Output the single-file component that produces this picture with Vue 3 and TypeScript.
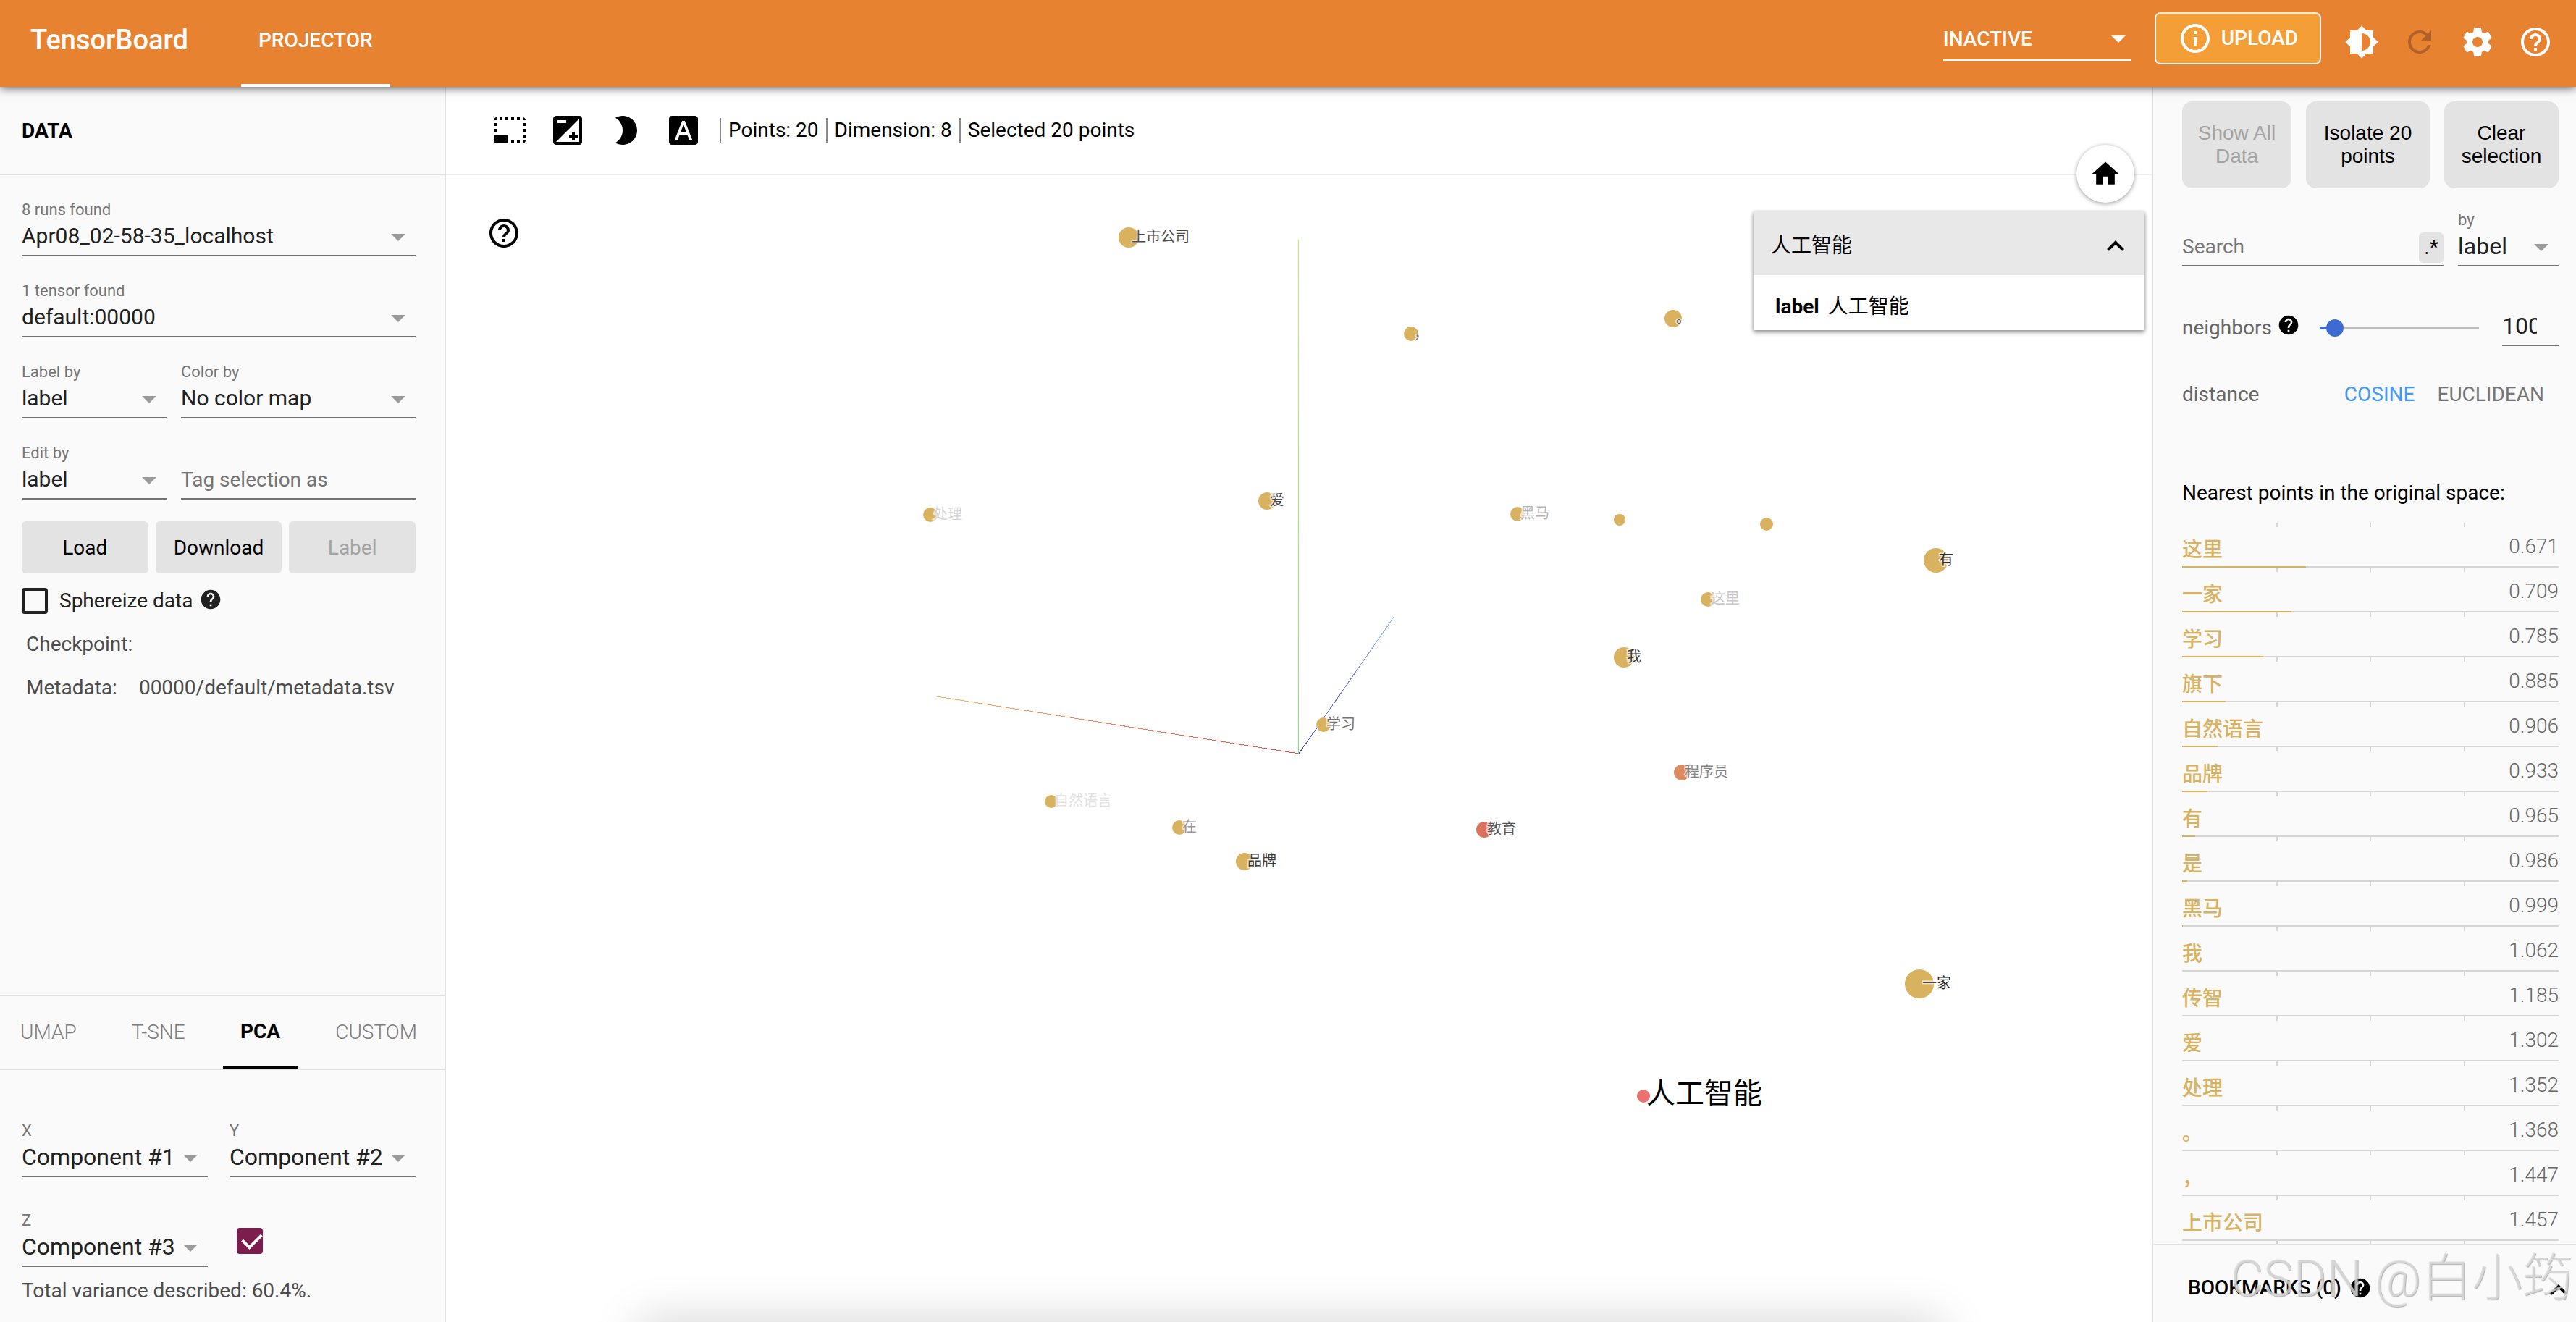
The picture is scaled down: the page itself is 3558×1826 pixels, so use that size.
<script setup lang="ts">
import { ref } from 'vue'

interface Neighbor {
  label: string
  distance: number
}

interface PlotPoint {
  x: number
  y: number
  r: number
  label?: string
  fill?: string
  ink?: string
  big?: boolean
}

const icons = {
  helpOutline:
    'M11 18h2v-2h-2v2zm1-16C6.48 2 2 6.48 2 12s4.48 10 10 10 10-4.48 10-10S17.52 2 12 2zm0 18c-4.41 0-8-3.59-8-8s3.59-8 8-8 8 3.59 8 8-3.59 8-8 8zm0-14c-2.21 0-4 1.79-4 4h2c0-1.1.9-2 2-2s2 .9 2 2c0 2-3 1.75-3 5h2c0-2.25 3-2.5 3-5 0-2.21-1.79-4-4-4z',
  help: 'M12 2C6.48 2 2 6.48 2 12s4.48 10 10 10 10-4.48 10-10S17.52 2 12 2zm1 17h-2v-2h2v2zm2.07-7.75l-.9.92C13.45 12.9 13 13.5 13 15h-2v-.5c0-1.1.45-2.1 1.17-2.83l1.24-1.26c.37-.36.59-.86.59-1.41 0-1.1-.9-2-2-2s-2 .9-2 2H8c0-2.21 1.79-4 4-4s4 1.79 4 4c0 .88-.36 1.68-.93 2.25z',
  info: 'M11 17h2v-6h-2v6zm1-15C6.48 2 2 6.48 2 12s4.48 10 10 10 10-4.48 10-10S17.52 2 12 2zm0 18c-4.41 0-8-3.59-8-8s3.59-8 8-8 8 3.59 8 8-3.59 8-8 8zM11 9h2V7h-2v2z',
  brightness:
    'M20 15.31L23.31 12 20 8.69V4h-4.69L12 .69 8.69 4H4v4.69L.69 12 4 15.31V20h4.69L12 23.31 15.31 20H20v-4.69zM12 18V6c3.31 0 6 2.69 6 6s-2.69 6-6 6z',
  refresh:
    'M17.65 6.35C16.2 4.9 14.21 4 12 4c-4.42 0-7.99 3.58-7.99 8s3.57 8 7.99 8c3.73 0 6.84-2.55 7.73-6h-2.08c-.82 2.33-3.04 4-5.65 4-3.31 0-6-2.69-6-6s2.69-6 6-6c1.66 0 3.14.69 4.22 1.78L13 11h7V4l-2.35 2.35z',
  settings:
    'M19.43 12.98c.04-.32.07-.64.07-.98s-.03-.66-.07-.98l2.11-1.65c.19-.15.24-.42.12-.64l-2-3.46c-.12-.22-.39-.3-.61-.22l-2.49 1c-.52-.4-1.08-.73-1.69-.98l-.38-2.65C14.46 2.18 14.25 2 14 2h-4c-.25 0-.46.18-.49.42l-.38 2.65c-.61.25-1.17.59-1.69.98l-2.49-1c-.23-.09-.49 0-.61.22l-2 3.46c-.13.22-.07.49.12.64l2.11 1.65c-.04.32-.07.65-.07.98s.03.66.07.98l-2.11 1.65c-.19.15-.24.42-.12.64l2 3.46c.12.22.39.3.61.22l2.49-1c.52.4 1.08.73 1.69.98l.38 2.65c.03.24.24.42.49.42h4c.25 0 .46-.18.49-.42l.38-2.65c.61-.25 1.17-.59 1.69-.98l2.49 1c.23.09.49 0 .61-.22l2-3.46c.12-.22.07-.49-.12-.64l-2.11-1.65zM12 15.5c-1.93 0-3.5-1.57-3.5-3.5s1.57-3.5 3.5-3.5 3.5 1.57 3.5 3.5-1.57 3.5-3.5 3.5z',
  home: 'M10 20v-6h4v6h5v-8h3L12 3 2 12h3v8z',
  chevronUp: 'M12 8l-6 6 1.41 1.41L12 10.83l4.59 4.58L18 14z',
  selectArea:
    'M23 15h-2v2h2v-2zm0-4h-2v2h2v-2zm0 8h-2v2c1 0 2-1 2-2zM15 3h-2v2h2V3zm8 4h-2v2h2V7zm-2-4v2h2c0-1-1-2-2-2zM3 21h8v-6H1v4c0 1.1.9 2 2 2zM3 7H1v2h2V7zm12 12h-2v2h2v-2zm4-16h-2v2h2V3zm0 16h-2v2h2v-2zM3 3C2 3 1 4 1 5h2V3zm0 8H1v2h2v-2zm8-8H9v2h2V3zM7 3H5v2h2V3z',
  exposure:
    'M15 17v2h2v-2h2v-2h-2v-2h-2v2h-2v2h2zm5-15H4c-1.1 0-2 .9-2 2v16c0 1.1.9 2 2 2h16c1.1 0 2-.9 2-2V4c0-1.1-.9-2-2-2zM5 5h6v2H5V5zm15 15H4L20 4v16z',
  night:
    'M10 2c-1.82 0-3.53.5-5 1.35C7.99 5.08 10 8.3 10 12s-2.01 6.92-5 8.65C6.47 21.5 8.18 22 10 22c5.52 0 10-4.48 10-10S15.52 2 10 2z',
  labels3d:
    'M9.93 13.5h4.14L12 7.98zM20 2H4c-1.1 0-2 .9-2 2v16c0 1.1.9 2 2 2h16c1.1 0 2-.9 2-2V4c0-1.1-.9-2-2-2zm-4.05 16.5l-1.14-3H9.17l-1.12 3H5.96l5.11-13h1.86l5.11 13h-2.09z',
}

const headerActions = [
  { name: 'Toggle theme', path: icons.brightness, off: false },
  { name: 'Reload data', path: icons.refresh, off: true },
  { name: 'Settings', path: icons.settings, off: false },
  { name: 'Help', path: icons.helpOutline, off: false },
]

const plotTools = [
  { name: 'Bounding box selection', path: icons.selectArea },
  { name: 'Edit mode', path: icons.exposure },
  { name: 'Night mode', path: icons.night },
  { name: '3D labels', path: icons.labels3d },
]

const tabs = ['UMAP', 'T-SNE', 'PCA', 'CUSTOM']
const activeTab = ref('PCA')
const sphereize = ref(false)
const useZ = ref(true)
const search = ref('')
const tag = ref('')
const neighborCount = ref(100)
const metric = ref('COSINE')

const neighbors: Neighbor[] = [
  { label: '这里', distance: 0.671 },
  { label: '一家', distance: 0.709 },
  { label: '学习', distance: 0.785 },
  { label: '旗下', distance: 0.885 },
  { label: '自然语言', distance: 0.906 },
  { label: '品牌', distance: 0.933 },
  { label: '有', distance: 0.965 },
  { label: '是', distance: 0.986 },
  { label: '黑马', distance: 0.999 },
  { label: '我', distance: 1.062 },
  { label: '传智', distance: 1.185 },
  { label: '爱', distance: 1.302 },
  { label: '处理', distance: 1.352 },
  { label: '。', distance: 1.368 },
  { label: '，', distance: 1.447 },
  { label: '上市公司', distance: 1.457 },
]

const barWidth = (n: Neighbor): string => `${Math.max(0, 1 - n.distance) * 100}%`

const points: PlotPoint[] = [
  { x: 943, y: 86, r: 14, label: '上市公司', ink: '#4a4a4a' },
  { x: 1333, y: 219, r: 10, label: '，', ink: '#777777' },
  { x: 1695, y: 198, r: 12, label: '。', ink: '#555555' },
  { x: 1134, y: 450, r: 12, label: '爱', ink: '#4a4a4a' },
  { x: 669, y: 469, r: 10, label: '处理', ink: '#d6d6d6' },
  { x: 1480, y: 468, r: 10, label: '黑马', ink: '#b4b4b4' },
  { x: 1621, y: 476, r: 8 },
  { x: 1824, y: 482, r: 9 },
  { x: 2058, y: 532, r: 17, label: '有', ink: '#2e2e2e' },
  { x: 1743, y: 586, r: 10, label: '这里', ink: '#c6c6c6' },
  { x: 1627, y: 666, r: 14, label: '我', ink: '#3a3a3a' },
  { x: 1212, y: 759, r: 10, label: '学习', ink: '#737373' },
  { x: 1707, y: 825, r: 11, label: '程序员', ink: '#858585', fill: '#dc8c60' },
  { x: 836, y: 865, r: 9, label: '自然语言', ink: '#e2e2e2' },
  { x: 1013, y: 901, r: 10, label: '在', ink: '#979797' },
  { x: 1434, y: 904, r: 11, label: '教育', ink: '#555555', fill: '#dc735f' },
  { x: 1103, y: 948, r: 12, label: '品牌', ink: '#3a3a3a' },
  { x: 2035, y: 1117, r: 20, label: '一家', ink: '#222222' },
  { x: 1654, y: 1272, r: 9, label: '人工智能', ink: '#000000', fill: '#eb716e', big: true },
]
</script>

<template>
  <div class="page">
    <header class="topbar">
      <h1 class="brand">TensorBoard</h1>
      <nav class="plugins"><a href="#projector" class="plugin">PROJECTOR</a></nav>
      <div class="select-box inactive">
        <select aria-label="Inactive plugins">
          <option>INACTIVE</option>
        </select>
        <svg class="arrow" viewBox="0 0 20 10"><path d="M0 0h20L10 10z" /></svg>
      </div>
      <button type="button" class="upload">
        <svg class="icon" viewBox="0 0 24 24"><path :d="icons.info" /></svg>
        <span>UPLOAD</span>
      </button>
      <div class="actions">
        <button
          v-for="a in headerActions"
          :key="a.name"
          type="button"
          class="icon-button"
          :class="{ off: a.off }"
          :aria-label="a.name"
        >
          <svg class="icon" viewBox="0 0 24 24"><path :d="a.path" /></svg>
        </button>
      </div>
    </header>

    <div class="body">
      <aside class="left">
        <h2 class="panel-title">DATA</h2>
        <div class="data-form">
          <div class="field">
            <label for="run">8 runs found</label>
            <div class="select-box">
              <select id="run"><option>Apr08_02-58-35_localhost</option></select>
              <svg class="arrow" viewBox="0 0 20 10"><path d="M0 0h20L10 10z" /></svg>
            </div>
          </div>
          <div class="field">
            <label for="tensor">1 tensor found</label>
            <div class="select-box">
              <select id="tensor"><option>default:00000</option></select>
              <svg class="arrow" viewBox="0 0 20 10"><path d="M0 0h20L10 10z" /></svg>
            </div>
          </div>
          <div class="pair">
            <div class="field">
              <label for="label-by">Label by</label>
              <div class="select-box">
                <select id="label-by"><option>label</option></select>
                <svg class="arrow" viewBox="0 0 20 10"><path d="M0 0h20L10 10z" /></svg>
              </div>
            </div>
            <div class="field">
              <label for="color-by">Color by</label>
              <div class="select-box">
                <select id="color-by"><option>No color map</option></select>
                <svg class="arrow" viewBox="0 0 20 10"><path d="M0 0h20L10 10z" /></svg>
              </div>
            </div>
          </div>
          <div class="pair">
            <div class="field">
              <label for="edit-by">Edit by</label>
              <div class="select-box">
                <select id="edit-by"><option>label</option></select>
                <svg class="arrow" viewBox="0 0 20 10"><path d="M0 0h20L10 10z" /></svg>
              </div>
            </div>
            <div class="field">
              <div class="text-box">
                <input v-model="tag" type="text" placeholder="Tag selection as" aria-label="Tag selection as" />
              </div>
            </div>
          </div>
          <div class="buttons">
            <button type="button">Load</button>
            <button type="button">Download</button>
            <button type="button" disabled>Label</button>
          </div>
          <div class="sphereize">
            <input id="sphereize" v-model="sphereize" type="checkbox" class="check" />
            <label for="sphereize">Sphereize data</label>
            <svg class="hint" viewBox="0 0 24 24"><path :d="icons.help" /></svg>
          </div>
          <p class="meta"><span>Checkpoint:</span></p>
          <p class="meta"><span>Metadata:</span><span>00000/default/metadata.tsv</span></p>
        </div>

        <section class="projections">
          <div class="tabs" role="tablist">
            <button
              v-for="t in tabs"
              :key="t"
              type="button"
              role="tab"
              class="tab"
              :class="{ active: t === activeTab }"
              :aria-selected="t === activeTab"
              @click="activeTab = t"
            >
              {{ t }}
            </button>
          </div>
          <div class="components">
            <div class="field">
              <label for="comp-x">X</label>
              <div class="select-box">
                <select id="comp-x"><option>Component #1</option></select>
                <svg class="arrow" viewBox="0 0 20 10"><path d="M0 0h20L10 10z" /></svg>
              </div>
            </div>
            <div class="field">
              <label for="comp-y">Y</label>
              <div class="select-box">
                <select id="comp-y"><option>Component #2</option></select>
                <svg class="arrow" viewBox="0 0 20 10"><path d="M0 0h20L10 10z" /></svg>
              </div>
            </div>
            <div class="field">
              <label for="comp-z">Z</label>
              <div class="select-box">
                <select id="comp-z"><option>Component #3</option></select>
                <svg class="arrow" viewBox="0 0 20 10"><path d="M0 0h20L10 10z" /></svg>
              </div>
            </div>
            <div class="z-toggle">
              <input v-model="useZ" type="checkbox" class="check" aria-label="Use Z component" />
            </div>
          </div>
          <p class="variance">Total variance described: 60.4%.</p>
        </section>
      </aside>

      <main class="stage">
        <div class="tools">
          <button v-for="t in plotTools" :key="t.name" type="button" class="icon-button" :aria-label="t.name">
            <svg class="icon" viewBox="0 0 24 24"><path :d="t.path" /></svg>
          </button>
          <div class="stats">
            <span>Points: 20</span>
            <span>Dimension: 8</span>
            <span>Selected 20 points</span>
          </div>
        </div>

        <div class="canvas">
          <svg class="plot" viewBox="0 0 2356 1584" preserveAspectRatio="xMinYMin meet">
            <defs>
              <linearGradient id="axis-y" gradientUnits="userSpaceOnUse" x1="0" y1="799" x2="0" y2="89">
                <stop offset="0" stop-color="#7fe676" />
                <stop offset="1" stop-color="#b9f05c" />
              </linearGradient>
              <linearGradient id="axis-x" gradientUnits="userSpaceOnUse" x1="1178" y1="799" x2="678" y2="720">
                <stop offset="0" stop-color="#e5484a" />
                <stop offset="1" stop-color="#f5b566" />
              </linearGradient>
              <linearGradient id="axis-z" gradientUnits="userSpaceOnUse" x1="1178" y1="799" x2="1310" y2="609">
                <stop offset="0" stop-color="#3c46e0" />
                <stop offset="1" stop-color="#93c4f7" />
              </linearGradient>
            </defs>
            <path class="axis" d="M1178 799L678 720" stroke="url(#axis-x)" />
            <path class="axis" d="M1178 799L1310 609" stroke="url(#axis-z)" />
            <rect x="1177" y="89" width="1" height="710" fill="url(#axis-y)" />
            <circle v-for="(p, i) in points" :key="i" :cx="p.x" :cy="p.y" :r="p.r" :fill="p.fill ?? '#d9b25f'" />
            <template v-for="(p, i) in points" :key="i">
              <text
                v-if="p.label"
                class="point-label"
                :class="{ big: p.big }"
                :x="p.x + 4"
                :y="p.y + (p.big ? 10 : 6)"
                :fill="p.ink"
              >
                {{ p.label }}
              </text>
            </template>
          </svg>

          <button type="button" class="icon-button guide" aria-label="Projector help">
            <svg class="icon" viewBox="0 0 24 24"><path :d="icons.helpOutline" /></svg>
          </button>
          <button type="button" class="home" aria-label="Reset view">
            <svg viewBox="0 0 24 24"><path :d="icons.home" /></svg>
          </button>
          <section class="card">
            <div class="card-head">
              <span>人工智能</span>
              <button type="button" class="icon-button" aria-label="Collapse">
                <svg class="icon" viewBox="0 0 24 24"><path :d="icons.chevronUp" /></svg>
              </button>
            </div>
            <div class="card-body"><b>label</b><span>人工智能</span></div>
          </section>
          <div class="dock-shadow"></div>
        </div>
      </main>

      <aside class="right">
        <div class="inspector">
          <div class="set-buttons">
            <button type="button" disabled>Show All Data</button>
            <button type="button">Isolate 20 points</button>
            <button type="button">Clear selection</button>
          </div>

          <div class="search-row">
            <div class="text-box">
              <input v-model="search" type="text" placeholder="Search" aria-label="Search" />
              <button type="button" class="regex" aria-label="Use regular expression">.*</button>
            </div>
            <div class="field">
              <label for="search-by">by</label>
              <div class="select-box">
                <select id="search-by"><option>label</option></select>
                <svg class="arrow" viewBox="0 0 20 10"><path d="M0 0h20L10 10z" /></svg>
              </div>
            </div>
          </div>

          <div class="neighbors">
            <label for="nn">neighbors</label>
            <svg class="hint" viewBox="0 0 24 24"><path :d="icons.help" /></svg>
            <input id="nn" v-model.number="neighborCount" type="range" min="5" max="999" />
            <div class="count"><input v-model.number="neighborCount" type="text" aria-label="Neighbor count" /></div>
          </div>

          <div class="distance">
            <span>distance</span>
            <a href="#cosine" :class="{ on: metric === 'COSINE' }" @click.prevent="metric = 'COSINE'">COSINE</a>
            <a href="#euclidean" :class="{ on: metric === 'EUCLIDEAN' }" @click.prevent="metric = 'EUCLIDEAN'">EUCLIDEAN</a>
          </div>

          <h3 class="nearest-title">Nearest points in the original space:</h3>
          <ul class="nearest">
            <li v-for="n in neighbors" :key="n.label">
              <div class="entry">
                <a href="#point">{{ n.label }}</a>
                <span>{{ n.distance.toFixed(3) }}</span>
              </div>
              <div class="bar"><div class="fill" :style="{ width: barWidth(n) }"></div></div>
            </li>
          </ul>
        </div>

        <div class="bookmarks">
          <span class="bookmarks-title">BOOKMARKS (0)</span>
          <svg class="hint" viewBox="0 0 24 24"><path :d="icons.help" /></svg>
          <button type="button" class="icon-button" aria-label="Expand bookmarks">
            <svg class="icon" viewBox="0 0 24 24"><path :d="icons.chevronUp" /></svg>
          </button>
        </div>
      </aside>
    </div>

    <div class="watermark">CSDN @白小筠</div>
  </div>
</template>

<style>
body {
  margin: 0;
}
</style>

<style scoped>
* {
  box-sizing: border-box;
}

.page {
  position: relative;
  display: flex;
  flex-direction: column;
  min-height: 100vh;
  overflow: hidden;
  background: #ffffff;
  color: #000000;
  font-family: Roboto, 'Noto Sans CJK SC', sans-serif;
  font-size: 28px;
  line-height: 40px;
}

h1,
h2,
h3,
p,
ul {
  margin: 0;
  padding: 0;
}

button,
input,
select {
  margin: 0;
  padding: 0;
  border: 0;
  outline: 0;
  border-radius: 0;
  background: none;
  color: inherit;
  font: inherit;
}

a {
  color: inherit;
  text-decoration: none;
}

svg {
  display: block;
  fill: currentColor;
}

.icon {
  width: 48px;
  height: 48px;
}

.hint {
  width: 32px;
  height: 32px;
}

.icon-button {
  display: block;
  flex: none;
}

/* top bar */
.topbar {
  position: relative;
  z-index: 2;
  display: flex;
  align-items: center;
  height: 120px;
  padding: 0 32px 10px 42px;
  background: #e78231;
  box-shadow: 0 2px 12px rgba(0, 0, 0, 0.6);
  color: #ffffff;
}

.brand {
  font-size: 38px;
  font-weight: 500;
}

.plugins {
  align-self: stretch;
  margin: 0 auto 0 73px;
}

.plugin {
  display: block;
  height: 120px;
  padding: 0 24px;
  border-bottom: 4px solid #ffffff;
  font-weight: 500;
  line-height: 112px;
}

.inactive {
  width: 260px;
  margin: 2px 32px 0 0;
}

.upload {
  display: flex;
  align-items: center;
  gap: 12px;
  height: 72px;
  margin: 0 32px 4px 0;
  padding: 0 30px;
  border: 2px solid #f1f1f1;
  border-radius: 8px;
  background: #f49e38;
  font-weight: 500;
}

.actions {
  display: flex;
  gap: 32px;
  margin-top: 6px;
}

.off {
  color: #b0612a;
}

/* form fields */
.field {
  display: flex;
  flex-direction: column;
  justify-content: flex-end;
  min-width: 0;
}

.field > label {
  color: #757575;
  font-size: 22px;
  line-height: 28px;
}

.select-box,
.text-box {
  display: grid;
  grid-template-columns: minmax(0, 1fr);
  align-items: center;
  border-bottom: 2px solid #737373;
}

.select-box > * {
  grid-area: 1 / 1;
}

.select-box select {
  width: 100%;
  height: 48px;
  padding-bottom: 4px;
  appearance: none;
  color: #212121;
  font-size: 30px;
}

.arrow {
  justify-self: end;
  width: 20px;
  height: 10px;
  margin-right: 14px;
  color: #9a9a9a;
  pointer-events: none;
}

.text-box input {
  width: 100%;
  height: 48px;
  padding-bottom: 4px;
}

.text-box input::placeholder {
  color: #757575;
  opacity: 1;
}

.inactive.select-box {
  border-color: #ffffff;
}

.inactive.select-box select {
  height: 54px;
  padding-bottom: 2px;
  color: #ffffff;
  font-size: 28px;
  font-weight: 500;
}

.inactive .arrow {
  margin: 0 8px 2px 0;
  color: #ffffff;
}

.check {
  display: block;
  flex: none;
  width: 36px;
  height: 36px;
  border: 4px solid #212121;
  border-radius: 4px;
  appearance: none;
}

.check:checked {
  padding-left: 9px;
  border-width: 2px 4px 4px;
  border-color: #7b1e4e;
  background: #7b1e4e;
}

.check:checked::after {
  content: '';
  display: block;
  width: 12px;
  height: 22px;
  border: solid #ffffff;
  border-width: 0 4px 4px 0;
  transform: rotate(45deg);
}

/* columns */
.body {
  display: flex;
  flex: 1;
}

.left {
  display: flex;
  flex: none;
  flex-direction: column;
  width: 616px;
  border-right: 2px solid #e0e0e0;
  background: #fafafa;
}

.panel-title {
  padding: 41px 30px 39px;
  border-bottom: 2px solid #e0e0e0;
  font-size: 28px;
  font-weight: 700;
}

.data-form {
  padding: 0 40px 0 30px;
}

.data-form .field {
  padding-top: 34px;
}

.pair {
  display: grid;
  grid-template-columns: 200fr 324fr;
  gap: 20px;
}

.buttons {
  display: grid;
  grid-template-columns: repeat(3, 1fr);
  gap: 10px;
  margin: 30px 0 20px;
}

.buttons button {
  height: 72px;
  padding-top: 2px;
  border-radius: 6px;
  background: #e3e3e3;
}

button:disabled {
  color: #a3a3a3;
}

.sphereize {
  display: flex;
  align-items: center;
  height: 36px;
  margin-bottom: 12px;
  color: #212121;
}

.sphereize label {
  margin: 0 9px 0 16px;
}

.sphereize .hint {
  margin-bottom: 4px;
}

.meta {
  display: flex;
  gap: 30px;
  padding-left: 6px;
  color: #4c4c4c;
  line-height: 60px;
}

.projections {
  margin-top: auto;
  border-top: 2px solid #e0e0e0;
}

.tabs {
  display: flex;
  justify-content: space-between;
  height: 102px;
  padding: 0 14px 0 4px;
  border-bottom: 2px solid #e0e0e0;
}

.tab {
  height: 101px;
  padding: 2px 24px 0;
  border-bottom: 4px solid transparent;
  color: #7d7d7d;
  font-weight: 300;
}

.tab.active {
  padding-top: 0;
  border-color: #000000;
  color: #000000;
  font-weight: 700;
}

.components {
  display: grid;
  grid-template-columns: 1fr 1fr;
  gap: 46px 30px;
  padding: 70px 40px 0 30px;
}

.components .select-box select {
  font-size: 32px;
}

.z-toggle {
  padding: 24px 0 0 10px;
}

.variance {
  padding: 13px 30px 23px;
  color: #4c4c4c;
}

/* plot area */
.stage {
  display: flex;
  flex: 1;
  flex-direction: column;
  min-width: 0;
}

.tools {
  display: flex;
  align-items: center;
  gap: 32px;
  height: 122px;
  padding-left: 64px;
  border-bottom: 2px solid #eeeeee;
}

.stats {
  display: flex;
  margin-left: -6px;
}

.stats span {
  padding: 0 10px;
  border-left: 2px solid #8a8a8a;
  line-height: 34px;
}

.canvas {
  position: relative;
  flex: 1;
}

.plot {
  position: absolute;
  inset: 0;
  width: 100%;
  height: 100%;
}

.axis {
  shape-rendering: crispEdges;
}

.point-label {
  font-size: 20px;
  paint-order: stroke;
  stroke: rgba(255, 255, 255, 0.7);
  stroke-width: 3px;
}

.point-label.big {
  font-size: 40px;
}

.guide {
  position: absolute;
  top: 56px;
  left: 56px;
}

.home {
  position: absolute;
  top: -42px;
  right: 24px;
  width: 80px;
  height: 80px;
  border-radius: 50%;
  background: #ffffff;
  box-shadow:
    0 2px 6px rgba(0, 0, 0, 0.3),
    0 0 4px rgba(0, 0, 0, 0.12);
}

.home svg {
  width: 44px;
  height: 44px;
  margin: 0 auto;
}

.card {
  position: absolute;
  top: 50px;
  right: 10px;
  width: 540px;
  background: #ffffff;
  box-shadow:
    0 3px 6px rgba(0, 0, 0, 0.4),
    0 0 4px rgba(0, 0, 0, 0.15);
}

.card-head {
  display: flex;
  align-items: center;
  justify-content: space-between;
  height: 88px;
  padding: 7px 16px 0 24px;
  background: #e8e8e8;
}

.card-body {
  display: flex;
  gap: 12px;
  height: 76px;
  padding: 24px 30px 0;
}

.dock-shadow {
  position: absolute;
  right: 291px;
  bottom: -60px;
  left: 267px;
  height: 60px;
  box-shadow: 0 0 66px rgba(0, 0, 0, 0.19);
}

/* inspector */
.right {
  position: relative;
  display: flex;
  flex: none;
  flex-direction: column;
  width: 586px;
  border-left: 2px solid #e0e0e0;
  background: #fafafa;
}

.inspector {
  flex: 1;
  padding: 20px 24px 0 40px;
}

.set-buttons {
  display: grid;
  grid-template-columns: 151fr 171fr 158fr;
  gap: 20px;
  font-family: 'Liberation Sans', Arial, sans-serif;
  line-height: 32px;
}

.set-buttons button {
  height: 120px;
  padding: 0 20px;
  border-radius: 14px;
  background: #e3e3e3;
}

.search-row {
  display: grid;
  grid-template-columns: 361fr 139fr;
  align-items: end;
  gap: 20px;
  margin-top: 30px;
}

.search-row .text-box {
  grid-template-columns: minmax(0, 1fr) 34px;
}

.search-row .select-box select {
  font-size: 32px;
}

.regex {
  height: 42px;
  border-radius: 6px;
  background: #e3e3e3;
}

.neighbors {
  display: flex;
  align-items: center;
  height: 50px;
  margin-top: 60px;
  color: #666666;
}

.neighbors .hint {
  flex: none;
  margin: 0 15px 8px 7px;
  color: #000000;
}

.neighbors input[type='range'] {
  flex: 1;
  min-width: 0;
  height: 24px;
  margin-right: 20px;
  appearance: none;
}

.neighbors input[type='range']::-webkit-slider-runnable-track {
  height: 4px;
  background:
    linear-gradient(#3e6bd1, #3e6bd1) 12px 0 / 16px 4px no-repeat,
    linear-gradient(90deg, transparent 12px, #bdbdbd 12px, #bdbdbd calc(100% - 12px), transparent calc(100% - 12px));
}

.neighbors input[type='range']::-webkit-slider-thumb {
  width: 24px;
  height: 24px;
  margin-top: -10px;
  border-radius: 50%;
  background: #3e6bd1;
  appearance: none;
}

.count {
  width: 78px;
  height: 50px;
  border-bottom: 2px solid #737373;
}

.count input {
  display: block;
  width: 48px;
  height: 44px;
  color: #212121;
  font-size: 32px;
}

.distance {
  display: flex;
  gap: 31px;
  margin-top: 47px;
  padding-right: 20px;
  color: #757575;
}

.distance span {
  margin-right: auto;
  color: #666666;
}

.distance .on {
  color: #4299f5;
}

.nearest-title {
  margin: 96px 0 21px;
  font-size: 28px;
  font-weight: 400;
}

.nearest {
  list-style: none;
}

.nearest li,
.nearest::after {
  background:
    linear-gradient(#d6d6d6, #d6d6d6) 25% 0 / 2px 6px no-repeat,
    linear-gradient(#d6d6d6, #d6d6d6) 50% 0 / 2px 6px no-repeat,
    linear-gradient(#d6d6d6, #d6d6d6) 75% 0 / 2px 6px no-repeat;
}

.nearest::after {
  content: '';
  display: block;
  height: 4px;
}

.entry {
  display: flex;
  align-items: flex-start;
  justify-content: space-between;
  height: 60px;
  padding-top: 13px;
  color: #666666;
  font-weight: 300;
}

.entry a {
  padding-top: 5px;
  color: #d9b25f;
  font-weight: 500;
}

.bar {
  height: 2px;
  background: #d6d6d6;
}

.fill {
  height: 2px;
  background: #d9b25f;
}

.bookmarks {
  display: flex;
  align-items: center;
  height: 108px;
  padding: 12px 0 0 48px;
  border-top: 2px solid #e0e0e0;
}

.bookmarks-title {
  margin-right: 10px;
  font-weight: 500;
}

.bookmarks .icon-button {
  margin: 6px 0 0 auto;
}

.watermark {
  position: absolute;
  right: 4px;
  bottom: 8px;
  z-index: 3;
  color: rgba(222, 222, 222, 0.78);
  font-size: 70px;
  font-weight: 300;
  line-height: 104px;
  text-shadow: 1px 1px 1px rgba(110, 110, 110, 0.5);
  pointer-events: none;
}
</style>
